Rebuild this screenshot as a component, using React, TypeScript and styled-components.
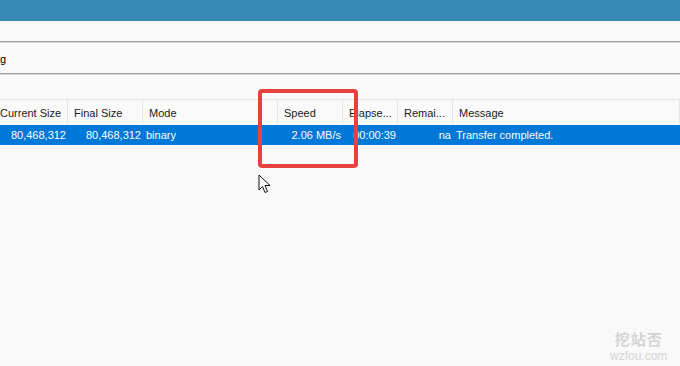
import React from 'react'
import styled, { createGlobalStyle } from 'styled-components'

const GlobalStyle = createGlobalStyle`
  html, body {
    margin: 0;
    padding: 0;
    background: #f9f9f9;
  }
  body {
    font-family: 'Liberation Sans', Arial, sans-serif;
    font-size: 11px;
    color: #1a1a1a;
  }
`

type Column = { title: string; width: number; align: 'left' | 'right' }

const columns: Column[] = [
  { title: 'Current Size', width: 68, align: 'right' },
  { title: 'Final Size', width: 75, align: 'right' },
  { title: 'Mode', width: 135, align: 'left' },
  { title: 'Speed', width: 65, align: 'right' },
  { title: 'Elapse...', width: 55, align: 'right' },
  { title: 'Remai...', width: 55, align: 'right' },
  { title: 'Message', width: 227, align: 'left' },
]

const row = ['80,468,312', '80,468,312', 'binary', '2.06 MB/s', '00:00:39', 'na', 'Transfer completed.']

const template = columns.map((c) => `${c.width}px`).join(' ')

const App: React.FC = () => {
  return (
    <Page>
      <GlobalStyle />
      <TitleBar />
      <Strip />
      <Field>
        <Fragment>g</Fragment>
      </Field>
      <Spacer />
      <Header>
        {columns.map((c, i) => (
          <HeaderCell key={c.title} $first={i === 0}>
            {c.title}
          </HeaderCell>
        ))}
      </Header>
      <Row>
        {row.map((v, i) => (
          <Cell key={i} $align={columns[i].align}>
            {v}
          </Cell>
        ))}
      </Row>

      <Highlight />
      <Cursor width="13" height="20" viewBox="0 0 13 20">
        <path
          d="M1 1 L1 16 L4.5 12.5 L7 18.5 L9.5 17.5 L7 11.5 L12 11.5 Z"
          fill="#fff"
          stroke="#111"
          strokeWidth="1"
          strokeLinejoin="round"
        />
      </Cursor>
      <Watermark>
        <MarkCn>挖站否</MarkCn>
        <MarkEn>wzfou.com</MarkEn>
      </Watermark>
    </Page>
  )
}

const Page = styled.div`
  position: relative;
  width: 680px;
  height: 366px;
  overflow: hidden;
  background: #f9f9f9;
`

const TitleBar = styled.div`
  height: 21px;
  background: #3789b5;
`

const Strip = styled.div`
  height: 20px;
  border-bottom: 1px solid #a0a0a0;
  box-shadow: 0 1px 0 #d8d8d8;
`

const Field = styled.div`
  height: 31px;
  display: flex;
  align-items: center;
  border-bottom: 1px solid #a0a0a0;
  box-shadow: 0 1px 0 #d8d8d8;
  color: #000;
  font-size: 11px;
`

const Fragment = styled.span`
  margin-top: 2px;
`

const Spacer = styled.div`
  height: 25px;
  border-bottom: 1px solid #e3e3e3;
`

const Header = styled.div`
  display: grid;
  grid-template-columns: ${template};
  height: 24px;
  background: #fafafa;
`

const HeaderCell = styled.div<{ $first: boolean }>`
  display: flex;
  align-items: center;
  padding-top: 2px;
  padding-left: ${(p) => (p.$first ? '0' : '6px')};
  border-right: 1px solid #e5e5e5;
  white-space: nowrap;
  overflow: hidden;
  color: #1a1a1a;
`

const Row = styled.div`
  display: grid;
  grid-template-columns: ${template};
  height: 20px;
  margin-top: 1px;
  background: #0078d7;
  color: #fff;
`

const Cell = styled.div<{ $align: 'left' | 'right' }>`
  display: flex;
  align-items: center;
  justify-content: ${(p) => (p.$align === 'right' ? 'flex-end' : 'flex-start')};
  padding: 0 2px 0 3px;
  white-space: nowrap;
  overflow: hidden;
`

const Highlight = styled.div`
  position: absolute;
  left: 258px;
  top: 89px;
  width: 92px;
  height: 71px;
  border: 4px solid #e8403f;
  border-radius: 4px;
`

const Cursor = styled.svg`
  position: absolute;
  left: 258px;
  top: 174px;
`

const Watermark = styled.div`
  position: absolute;
  left: 610px;
  top: 331px;
  display: flex;
  flex-direction: column;
  align-items: center;
  gap: 3px;
  color: #d4d4d4;
`

const MarkCn = styled.div`
  font-family: 'Noto Sans CJK SC', sans-serif;
  font-weight: 700;
  font-size: 15px;
  line-height: 16px;
  letter-spacing: 1px;
`

const MarkEn = styled.div`
  font-family: 'Liberation Sans', sans-serif;
  font-size: 12px;
  line-height: 12px;
`

export default App
